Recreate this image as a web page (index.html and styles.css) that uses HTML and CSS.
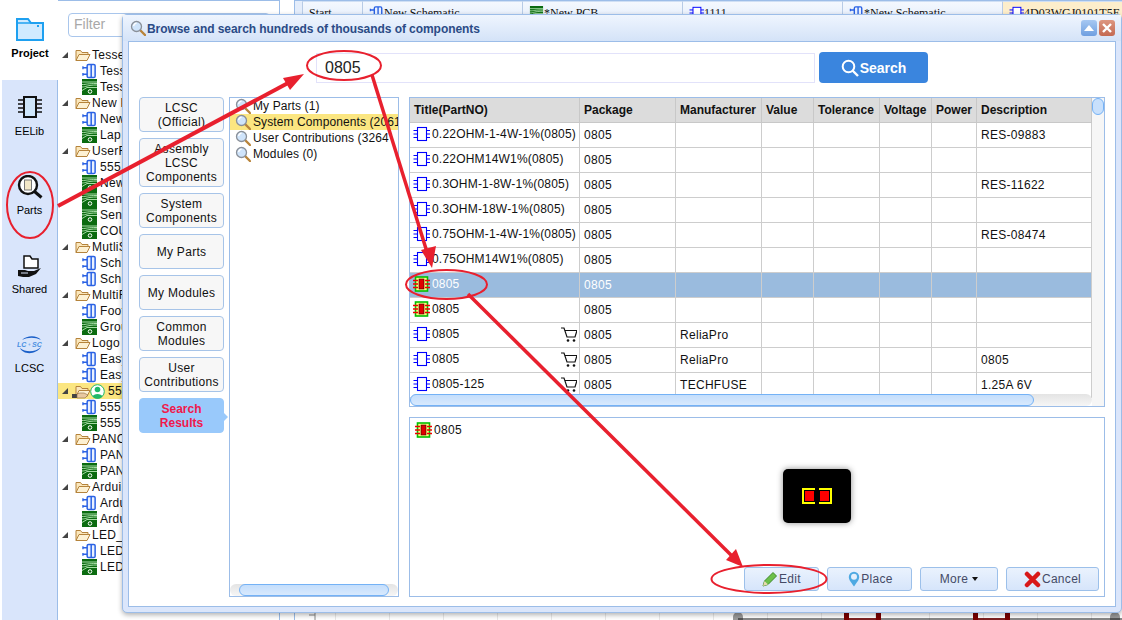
FILE: index.html
```html
<!DOCTYPE html>
<html lang="en">
<head>
<meta charset="utf-8">
<title>Browse components</title>
<link rel="stylesheet" href="styles.css">
</head>
<body>
<svg class="defs" width="0" height="0" aria-hidden="true">
  <symbol id="sch" viewBox="0 0 16 16">
    <rect x="5.500" y="1" width="8.500" height="14" rx="1.500" fill="#eaf1ff" stroke="#2a62e4" stroke-width="1.600"/>
    <path d="M1 4.500h4.500M1 11.500h4.500M9.800 1v14" fill="none" stroke="#2a62e4" stroke-width="1.600"/>
    <path d="M1 3v3M1 10v3" stroke="#2a62e4" stroke-width="1.400"/>
  </symbol>
  <symbol id="pcb" viewBox="0 0 15 16">
    <rect width="15" height="16" fill="#0b6b10"/>
    <path d="M0 3h15M0 5.500c5 0 5-1 15-1M0 8c4 0 5-2 15-2M0 11.500l5-3h10" fill="none" stroke="#a6dca6" stroke-width="1"/>
    <circle cx="8" cy="12.500" r="1.800" fill="#0b6b10" stroke="#fff" stroke-width="1"/>
  </symbol>
  <symbol id="tsch" viewBox="0 0 17 16">
    <rect x="4.500" y="1.500" width="9" height="13" fill="#fff" stroke="#0000ff" stroke-width="1.100"/>
    <path d="M0.500 4.500h4M0.500 8h4M0.500 11.500h4M13.500 4.500H17M13.500 8H17M13.500 11.500H17" stroke="#0000ff" stroke-width="1.100"/>
  </symbol>
  <symbol id="chip" viewBox="0 0 17 16">
    <rect x="2.500" y="1" width="12" height="14" fill="#ffff80" stroke="#00c000" stroke-width="1.600"/>
    <rect x="6" y="3" width="5" height="10" fill="#e00000" stroke="#300" stroke-width=".6"/>
    <path d="M0 4.500h5M0 8h5M0 11.500h5M12 4.500h5M12 8h5M12 11.500h5" stroke="#f00000" stroke-width="1.500"/>
  </symbol>
  <symbol id="cart" viewBox="0 0 16 15">
    <path d="M0 1h3l3 9h8l2-6.500H4" fill="none" stroke="#111" stroke-width="1.200"/>
    <circle cx="7" cy="13.500" r="1.300" fill="#111"/><circle cx="13" cy="13.500" r="1.300" fill="#111"/>
  </symbol>
  <symbol id="lens" viewBox="0 0 16 16">
    <path d="M10 10l5 5" stroke="#b9843a" stroke-width="2.400" stroke-linecap="round"/>
    <circle cx="6.500" cy="6.500" r="5" fill="#cfe4fb" stroke="#8a9099" stroke-width="1.300"/>
    <path d="M3.500 6c.5-2 1.500-2.700 3-3" fill="none" stroke="#fff" stroke-width="1.300"/>
  </symbol>
  <symbol id="folder" viewBox="0 0 16 14">
    <path d="M1 12.500V2.500h4.500l1.500 2h6v2" fill="#fbe7bb" stroke="#b5833b"/>
    <path d="M1 12.500l3-6h11l-3 6z" fill="#fdf1d3" stroke="#b5833b"/>
  </symbol>
</svg>

<div class="app">
  <nav class="rail">
    <div class="rail-item rail-active">
      <svg class="rail-icon" width="28" height="24" viewBox="0 0 28 24"><path d="M1 23V2h11l3 4h12v17z" fill="#cfeaff" stroke="#1ea0f0" stroke-width="2"/><path d="M1 6h14" stroke="#1ea0f0" stroke-width="1.500"/><rect x="21" y="8" width="2" height="2" fill="#1ea0f0"/></svg>
      <span class="rail-label rail-bold lbl-project">Project</span>
    </div>
    <div class="rail-item">
      <svg class="rail-icon" width="26" height="24" viewBox="0 0 26 24"><rect x="7" y="2" width="12" height="20" fill="#cfe6fb" stroke="#111" stroke-width="2"/><path d="M1 5h5M1 9h5M1 13h5M1 17h5M20 5h5M20 9h5M20 13h5M20 17h5" stroke="#111" stroke-width="1.500"/></svg>
      <span class="rail-label lbl-eelib">EELib</span>
    </div>
    <div class="rail-item">
      <svg class="rail-icon" width="26" height="24" viewBox="0 0 26 24"><circle cx="11" cy="10" r="9" fill="#fff" stroke="#111" stroke-width="2.400"/><rect x="7.500" y="5" width="7" height="10" fill="#f3e8c8" stroke="#777"/><path d="M17.500 16.500l7 6" stroke="#111" stroke-width="3"/></svg>
      <span class="rail-label lbl-parts">Parts</span>
    </div>
    <div class="rail-item">
      <svg class="rail-icon" width="26" height="24" viewBox="0 0 26 24"><path d="M7 13V1h6l2 3h6v9z" fill="#fff" stroke="#111" stroke-width="1.500"/><path d="M1 15h7l3 1h6l7-3-5 6-7 3H6l-5-1z" fill="#111"/><path d="M4 18h7" stroke="#d9e5fb"/></svg>
      <span class="rail-label lbl-shared">Shared</span>
    </div>
    <div class="rail-item">
      <svg class="rail-icon logo-icon" width="26" height="20" viewBox="0 0 26 20"><path d="M3 13c3 7 16 7 21-1-5 5-15 6-21 1zM5 5c5-5 15-5 19 0-6-3-13-3-19 0z" fill="#1a5fc8"/><text class="logo-text" x="0" y="12">LC</text><text class="logo-text" x="15" y="12">SC</text><circle cx="12.500" cy="9.500" r="1" fill="#7fb2ee"/></svg>
      <span class="rail-label lbl-lcsc">LCSC</span>
    </div>
  </nav>

  <aside class="tree-panel">
    <div class="filter-row"><input class="filter" placeholder="Filter"></div>
    <ul class="tree">
      <li class="folder-row"><i class="tri"></i><svg class="ic-f"><use href="#folder"/></svg>Tesse</li>
      <li class="leaf"><svg class="ic"><use href="#sch"/></svg>Tess</li>
      <li class="leaf"><svg class="ic"><use href="#pcb"/></svg>Tess</li>
      <li class="folder-row"><i class="tri"></i><svg class="ic-f"><use href="#folder"/></svg>New P</li>
      <li class="leaf"><svg class="ic"><use href="#sch"/></svg>New</li>
      <li class="leaf"><svg class="ic"><use href="#pcb"/></svg>Lap</li>
      <li class="folder-row"><i class="tri"></i><svg class="ic-f"><use href="#folder"/></svg>UserF</li>
      <li class="leaf"><svg class="ic"><use href="#sch"/></svg>555</li>
      <li class="leaf"><svg class="ic"><use href="#pcb"/></svg>New</li>
      <li class="leaf"><svg class="ic"><use href="#pcb"/></svg>Sen</li>
      <li class="leaf"><svg class="ic"><use href="#pcb"/></svg>Sen</li>
      <li class="leaf"><svg class="ic"><use href="#pcb"/></svg>COU</li>
      <li class="folder-row"><i class="tri"></i><svg class="ic-f"><use href="#folder"/></svg>MutliS</li>
      <li class="leaf"><svg class="ic"><use href="#sch"/></svg>Sch</li>
      <li class="leaf"><svg class="ic"><use href="#sch"/></svg>Sch</li>
      <li class="folder-row"><i class="tri"></i><svg class="ic-f"><use href="#folder"/></svg>MultiF</li>
      <li class="leaf"><svg class="ic"><use href="#sch"/></svg>Foot</li>
      <li class="leaf"><svg class="ic"><use href="#pcb"/></svg>Grou</li>
      <li class="folder-row"><i class="tri"></i><svg class="ic-f"><use href="#folder"/></svg>Logo</li>
      <li class="leaf"><svg class="ic"><use href="#sch"/></svg>Easy</li>
      <li class="leaf"><svg class="ic"><use href="#sch"/></svg>Easy</li>
      <li class="folder-row shared-row"><i class="tri"></i><span class="shared-folder"><svg class="ic-f"><use href="#folder"/></svg><svg class="ic-hand" viewBox="0 0 16 7"><path d="M0 2h5V6H0z" fill="#444"/><path d="M5 2l3-1h4l4 2-3 3H5z" fill="#e8c8a0" stroke="#8a6a40" stroke-width=".6"/></svg></span><svg class="ic-user" viewBox="0 0 15 15"><circle cx="7.500" cy="7.500" r="6.800" fill="#fff" stroke="#1fb86a"/><circle cx="7.500" cy="5.500" r="2.800" fill="#1fb86a"/><path d="M2.500 12.500c1-3.500 9-3.500 10 0a6.500 6.500 0 0 1-10 0z" fill="#1fb86a"/></svg>555</li>
      <li class="leaf"><svg class="ic"><use href="#sch"/></svg>555</li>
      <li class="leaf"><svg class="ic"><use href="#pcb"/></svg>555</li>
      <li class="folder-row"><i class="tri"></i><svg class="ic-f"><use href="#folder"/></svg>PANC</li>
      <li class="leaf"><svg class="ic"><use href="#sch"/></svg>PAN</li>
      <li class="leaf"><svg class="ic"><use href="#pcb"/></svg>PAN</li>
      <li class="folder-row"><i class="tri"></i><svg class="ic-f"><use href="#folder"/></svg>Ardui</li>
      <li class="leaf"><svg class="ic"><use href="#sch"/></svg>Ardu</li>
      <li class="leaf"><svg class="ic"><use href="#pcb"/></svg>Ardu</li>
      <li class="folder-row"><i class="tri"></i><svg class="ic-f"><use href="#folder"/></svg>LED_</li>
      <li class="leaf"><svg class="ic"><use href="#sch"/></svg>LED</li>
      <li class="leaf"><svg class="ic"><use href="#pcb"/></svg>LED</li>
    </ul>
  </aside>

  <div class="gutter"></div>

  <main class="workspace">
    <div class="tabs">
      <div class="tab tab-start">Start</div>
      <div class="tab"><svg class="tab-ic"><use href="#sch"/></svg>New Schematic</div>
      <div class="tab"><svg class="tab-ic"><use href="#pcb"/></svg>*New PCB</div>
      <div class="tab"><svg class="tab-ic"><use href="#tsch"/></svg>1111</div>
      <div class="tab"><svg class="tab-ic"><use href="#sch"/></svg>*New Schematic</div>
      <div class="tab tab-on"><svg class="tab-ic"><use href="#tsch"/></svg>4D03WGJ0101T5E</div>
    </div>
    <div class="canvas">
      <svg class="canvas-art" width="829" height="606" viewBox="293 14 829 606">
        <path d="M733 620v-3a5 5 0 0 1 10 0v3M1110 620v-3a5 5 0 0 1 10 0v3" fill="#999"/>
        <path d="M738 619h384" stroke="#111"/>
        <path d="M846.500 613v7M878.500 613v7M975.500 613v7M1007.500 613v7" stroke="#7a0000" stroke-width="5"/>
        <path d="M849 619h28M978 619h28" stroke="#7a0000" stroke-width="1.500"/>
        <path d="M315 613v7M315 615h-6" stroke="#888"/>
      </svg>
    </div>
  </main>
</div>

<section class="dialog">
  <header class="dlg-title">
    <svg class="ic-lens ic-lens-title"><use href="#lens"/></svg>
    <span class="dlg-title-text">Browse and search hundreds of thousands of components</span>
    <span class="dlg-btn dlg-collapse"><svg width="10" height="6" viewBox="0 0 10 6"><path d="M5 0l5 6H0z" fill="#fff"/></svg></span>
    <span class="dlg-btn dlg-close"><svg width="10" height="10" viewBox="0 0 10 10"><path d="M1 1l8 8M9 1l-8 8" stroke="#fff" stroke-width="2.400"/></svg></span>
  </header>
  <div class="dlg-body">
    <div class="search-row">
      <input class="search-input" value="0805">
      <button class="search-btn"><svg width="18" height="18" viewBox="0 0 18 18"><circle cx="7.500" cy="7.500" r="5.800" fill="none" stroke="#fff" stroke-width="2"/><path d="M11.500 11.500l5.500 5.500" stroke="#fff" stroke-width="2.400"/></svg>Search</button>
    </div>
    <div class="dlg-main">
      <div class="side">
        <div class="side-btn">LCSC<br>(Official)</div>
        <div class="side-btn">Assembly<br>LCSC<br>Components</div>
        <div class="side-btn">System<br>Components</div>
        <div class="side-btn">My Parts</div>
        <div class="side-btn">My Modules</div>
        <div class="side-btn">Common<br>Modules</div>
        <div class="side-btn">User<br>Contributions</div>
        <div class="side-btn side-active">Search<br>Results</div>
      </div>
      <div class="cat-list">
        <div class="cat"><svg class="ic-lens"><use href="#lens"/></svg>My Parts (1)</div>
        <div class="cat cat-on"><svg class="ic-lens"><use href="#lens"/></svg>System Components (2061</div>
        <div class="cat"><svg class="ic-lens"><use href="#lens"/></svg>User Contributions (3264</div>
        <div class="cat"><svg class="ic-lens"><use href="#lens"/></svg>Modules (0)</div>
        <div class="hbar hbar-list"><span class="thumb"></span></div>
      </div>
      <div class="right">
        <div class="grid-wrap">
          <table class="grid">
            <colgroup><col class="c1"><col class="c2"><col class="c3"><col class="c4"><col class="c5"><col class="c6"><col class="c7"><col class="c8"></colgroup>
            <thead><tr><th>Title(PartNO)</th><th>Package</th><th>Manufacturer</th><th>Value</th><th>Tolerance</th><th>Voltage</th><th>Power</th><th>Description</th></tr></thead>
            <tbody>
              <tr><td><div class="tcell"><svg class="ic-t"><use href="#tsch"/></svg>0.22OHM-1-4W-1%(0805)</div></td><td>0805</td><td></td><td></td><td></td><td></td><td></td><td>RES-09883</td></tr>
              <tr><td><div class="tcell"><svg class="ic-t"><use href="#tsch"/></svg>0.22OHM14W1%(0805)</div></td><td>0805</td><td></td><td></td><td></td><td></td><td></td><td></td></tr>
              <tr><td><div class="tcell"><svg class="ic-t"><use href="#tsch"/></svg>0.3OHM-1-8W-1%(0805)</div></td><td>0805</td><td></td><td></td><td></td><td></td><td></td><td>RES-11622</td></tr>
              <tr><td><div class="tcell"><svg class="ic-t"><use href="#tsch"/></svg>0.3OHM-18W-1%(0805)</div></td><td>0805</td><td></td><td></td><td></td><td></td><td></td><td></td></tr>
              <tr><td><div class="tcell"><svg class="ic-t"><use href="#tsch"/></svg>0.75OHM-1-4W-1%(0805)</div></td><td>0805</td><td></td><td></td><td></td><td></td><td></td><td>RES-08474</td></tr>
              <tr><td><div class="tcell"><svg class="ic-t"><use href="#tsch"/></svg>0.75OHM14W1%(0805)</div></td><td>0805</td><td></td><td></td><td></td><td></td><td></td><td></td></tr>
              <tr class="row-on"><td><div class="tcell"><svg class="ic-t"><use href="#chip"/></svg>0805</div></td><td>0805</td><td></td><td></td><td></td><td></td><td></td><td></td></tr>
              <tr><td><div class="tcell"><svg class="ic-t"><use href="#chip"/></svg>0805</div></td><td>0805</td><td></td><td></td><td></td><td></td><td></td><td></td></tr>
              <tr><td><div class="tcell"><svg class="ic-t"><use href="#tsch"/></svg>0805<svg class="ic-cart"><use href="#cart"/></svg></div></td><td>0805</td><td>ReliaPro</td><td></td><td></td><td></td><td></td><td></td></tr>
              <tr><td><div class="tcell"><svg class="ic-t"><use href="#tsch"/></svg>0805<svg class="ic-cart"><use href="#cart"/></svg></div></td><td>0805</td><td>ReliaPro</td><td></td><td></td><td></td><td></td><td>0805</td></tr>
              <tr><td><div class="tcell"><svg class="ic-t"><use href="#tsch"/></svg>0805-125<svg class="ic-cart"><use href="#cart"/></svg></div></td><td>0805</td><td>TECHFUSE</td><td></td><td></td><td></td><td></td><td>1.25A 6V</td></tr>
            </tbody>
          </table>
          <div class="vbar"><span class="vthumb"></span></div>
          <div class="hbar hbar-grid"><span class="thumb"></span></div>
        </div>
        <div class="preview">
          <div class="preview-item"><svg class="ic-t"><use href="#chip"/></svg>0805</div>
          <div class="tile"><svg width="30" height="16" viewBox="0 0 30 16"><path d="M13 1H1v14h12M17 1h12v14H17" fill="none" stroke="#ff0" stroke-width="2"/><rect x="3" y="3" width="9" height="10" fill="#f00"/><rect x="18" y="3" width="9" height="10" fill="#f00"/></svg></div>
          <div class="actions">
            <button class="act act-edit"><svg width="16" height="16" viewBox="0 0 16 16"><path d="M1 15l1.500-5L11 1.500 14.500 5 6 13.500z" fill="#6cc04a" stroke="#3f8a2a"/><path d="M1 15l1.500-5L6 13.500z" fill="#e8d9b0"/></svg>Edit</button>
            <button class="act act-place"><svg width="12" height="16" viewBox="0 0 12 16"><path d="M6 15.500C3 11 .8 9 .8 6a5.200 5.200 0 0 1 10.400 0c0 3-2.200 5-5.200 9.500z" fill="#4ea9e2"/><circle cx="6" cy="5.800" r="3" fill="#e4effc"/></svg>Place</button>
            <button class="act act-more">More<i class="caret"></i></button>
            <button class="act act-cancel"><svg width="17" height="17" viewBox="0 0 17 17"><path d="M3 3l11 11M14 3L3 14" stroke="#d81818" stroke-width="4.500" stroke-linecap="round"/></svg>Cancel</button>
          </div>
        </div>
      </div>
    </div>
  </div>
</section>

<svg class="overlay" width="1122" height="620" viewBox="0 0 1122 620" aria-hidden="true">
  <g fill="none" stroke="#e8202e" stroke-width="2">
    <ellipse cx="30" cy="205" rx="23" ry="33"/>
    <ellipse cx="344" cy="65.500" rx="37" ry="14.500"/>
    <ellipse cx="446.500" cy="284.500" rx="40.500" ry="14.500"/>
    <ellipse cx="769" cy="579" rx="57.500" ry="14"/>
  </g>
  <g stroke="#e8202e" fill="none">
    <path d="M58 206L288 83" stroke-width="4"/>
    <path d="M372 75L427 252" stroke-width="3.500"/>
    <path d="M468 294L733 557" stroke-width="3.500"/>
  </g>
  <g fill="#e8202e">
    <path d="M304 74L283 78L290 90z"/>
    <path d="M432 268L421 250L436 246z"/>
    <path d="M743 567L726 560L736 549z"/>
  </g>
</svg>
</body>
</html>
```

FILE: styles.css
```css
* { box-sizing: border-box; }
html, body { margin: 0; padding: 0; }
body {
  width: 1122px;
  height: 620px;
  overflow: hidden;
  position: relative;
  background: #fff;
  font-family: "Liberation Sans", Arial, sans-serif;
  font-size: 12px;
  color: #111;
}
.defs { position: absolute; }

.app { display: flex; height: 620px; padding-left: 2px; }

/* left rail */
.rail {
  width: 56px;
  flex: none;
  background: #d9e5fb;
  border-right: 1px solid #9cbde8;
}
.rail-item {
  height: 80px;
  padding-top: 15px;
  display: flex;
  flex-direction: column;
  align-items: center;
}
.rail-active { background: #fff; padding-top: 17px; margin-right: -1px; }
.rail-icon { display: block; height: 24px; flex: none; }
.logo-icon { height: 20px; }
.rail-label { font-size: 11px; line-height: 13px; color: #000; }
.lbl-project { margin-top: 6px; }
.lbl-eelib { margin-top: 6px; }
.lbl-parts { margin-top: 5px; }
.lbl-shared { margin-top: 4px; }
.lbl-lcsc { margin-top: 7px; }
.rail-bold { font-weight: 700; }
.logo-text { font: italic 700 7px "Liberation Sans", sans-serif; fill: #4a90e2; }

/* tree */
.tree-panel {
  width: 222px;
  flex: none;
  border-top: 1px solid #9cbde8;
  border-right: 1px solid #9cbde8;
  padding-top: 12px;
}
.filter-row { padding-left: 10px; }
.filter {
  width: 202px;
  height: 24px;
  border: 1px solid #a9c6ec;
  border-radius: 4px;
  padding: 0 5px 2px;
  font: 14px "Liberation Sans", sans-serif;
  outline: none;
}
.filter::placeholder { color: #a8a8a8; opacity: 1; }
.tree { list-style: none; margin: 10px 0 0; padding: 0; }
.tree li {
  height: 16px;
  display: flex;
  align-items: center;
  white-space: nowrap;
  letter-spacing: .3px;
  line-height: 16px;
}
.folder-row { padding-left: 4px; }
.leaf { padding-left: 24px; }
.tri {
  width: 0;
  height: 0;
  border-style: solid;
  border-width: 0 0 6px 6px;
  border-color: transparent transparent #444 transparent;
  margin-right: 7px;
  flex: none;
}
.ic-f { width: 16px; height: 14px; margin-right: 1px; flex: none; }
.ic { width: 15px; height: 16px; margin-right: 3px; flex: none; }
.shared-folder { position: relative; display: flex; margin-right: -2px; }
.ic-hand { position: absolute; left: -3px; top: 8px; width: 16px; height: 7px; }
.ic-user { width: 15px; height: 15px; margin-right: 3px; flex: none; }
.shared-row { background: #fbe681; }

.gutter { width: 14px; flex: none; }

/* workspace */
.workspace { flex: 1; min-width: 0; display: flex; flex-direction: column; }
.tabs {
  height: 32px;
  flex: none;
  display: flex;
  padding-left: 7px;
  border-top: 1px solid #9cbde8;
  border-left: 1px solid #9cbde8;
  background: #e4edfb;
  font-family: "Liberation Serif", serif;
  overflow: hidden;
}
.tab {
  width: 160px;
  flex: none;
  padding: 4px 0 0 6px;
  border-left: 1px solid #b7cbe6;
  border-top: 1px solid #cfdff4;
  display: flex;
  align-items: flex-start;
  line-height: 14px;
  white-space: nowrap;
  background: linear-gradient(#f4f8fe, #d9e6f9);
}
.tab-start { width: 60px; }
.tab-on { background: #fdeecb; }
.tab-ic { width: 15px; height: 14px; flex: none; }
.canvas {
  flex: 1;
  position: relative;
  border-left: 1px solid #9cbde8;
  background-image: linear-gradient(to right, #e8e8e8 1px, transparent 1px);
  background-size: 54px 100%;
  background-position: 40px 0;
}
.canvas-art { position: absolute; right: 0; bottom: 0; }

/* dialog window */
.dialog {
  position: absolute;
  left: 122px;
  top: 14px;
  width: 1000px;
  height: 599px;
  background: #dbe6fb;
  border: 1px solid #9cbde8;
  border-radius: 5px;
  padding: 0 5px 5px;
  box-shadow: 0 2px 5px rgba(0,0,0,.3);
  display: flex;
  flex-direction: column;
}
.dlg-title {
  height: 26px;
  flex: none;
  margin: 0 -5px;
  padding: 0 6px 0 7px;
  background: linear-gradient(#eff5fe, #d4e3f8);
  display: flex;
  align-items: center;
}
.ic-lens { width: 16px; height: 16px; flex: none; margin-right: 2px; }
.ic-lens-title { margin-right: 1px; }
.dlg-title-text {
  font-weight: 700;
  color: #2b4b86;
  flex: 1;
  padding-top: 2px;
  letter-spacing: -.06px;
}
.dlg-btn {
  width: 16px;
  height: 16px;
  border-radius: 3px;
  margin-left: 2px;
  display: flex;
  align-items: center;
  justify-content: center;
}
.dlg-collapse { background: linear-gradient(#a6c8f2, #6f9fe0); }
.dlg-close { background: linear-gradient(#dd9680, #c46a52); }

.dlg-body {
  flex: 1;
  background: #fff;
  border: 1px solid #9cbde8;
  padding: 10px 10px 0;
}
.search-row { display: flex; align-items: flex-end; gap: 4px; padding-left: 177px; height: 31px; margin-bottom: 14px; }
.search-input {
  width: 499px;
  height: 30px;
  border: 1px solid #e2e2fa;
  padding: 0 8px;
  font: 16px "Liberation Sans", sans-serif;
  color: #222;
  outline: none;
}
.search-btn {
  width: 109px;
  height: 31px;
  border: 0;
  border-radius: 4px;
  background: #3a85de;
  color: #fff;
  font: 700 14px "Liberation Sans", sans-serif;
  display: flex;
  align-items: center;
  justify-content: center;
  gap: 1px;
  padding: 0;
}
.dlg-main { display: flex; height: 500px; }

/* sidebar */
.side { width: 85px; flex: none; margin-right: 5px; display: flex; flex-direction: column; gap: 6px; }
.side-btn {
  min-height: 35px;
  border: 1px solid #a7c4e8;
  border-radius: 4px;
  background: #f7f7f7;
  text-align: center;
  line-height: 14px;
  letter-spacing: .3px;
  padding: 3px 0 2px;
  display: flex;
  align-items: center;
  justify-content: center;
  color: #111;
}
.side-active {
  position: relative;
  background: #99c9fb;
  border-color: #99c9fb;
  color: #f0184c;
  font-weight: 700;
  letter-spacing: 0;
}
.side-active::after {
  content: "";
  position: absolute;
  left: 100%;
  top: 13px;
  border-style: solid;
  border-width: 5px 0 5px 5px;
  border-color: transparent transparent transparent #99c9fb;
}

/* category list */
.cat-list {
  width: 170px;
  flex: none;
  position: relative;
  margin-right: 10px;
  border: 1px solid #9cbde8;
  overflow: hidden;
}
.cat {
  height: 16px;
  display: flex;
  align-items: center;
  padding-left: 5px;
  white-space: nowrap;
  letter-spacing: .1px;
}
.cat-on { background: #fbe681; }

/* scroll bars */
.hbar {
  position: absolute;
  height: 12px;
  background: linear-gradient(#e4e4e4, #f6f6f6);
  border-radius: 6px;
}
.thumb {
  position: absolute;
  top: 0;
  bottom: 0;
  border: 1px solid #74b2f6;
  border-radius: 6px;
  background: linear-gradient(#c4defc, #d8e9fd);
}
.hbar-list { left: 0; right: 0; bottom: 0; }
.hbar-list .thumb { left: 9px; width: 150px; }
.hbar-grid { left: 0; width: 682px; bottom: 0; }
.hbar-grid .thumb { left: 0; width: 624px; }
.vbar { position: absolute; top: 0; right: 0; bottom: 0; width: 12px; background: #f6f6f6; }
.vthumb {
  position: absolute;
  left: 0;
  right: 0;
  top: 0;
  height: 17px;
  border: 1px solid #74b2f6;
  border-radius: 6px;
  background: #c8e0fc;
}

/* grid */
.right { flex: 1; min-width: 0; display: flex; flex-direction: column; gap: 10px; }
.grid-wrap {
  height: 310px;
  flex: none;
  position: relative;
  border: 1px solid #9cbde8;
  overflow: hidden;
}
.grid { border-collapse: separate; border-spacing: 0; table-layout: fixed; width: 682px; }
.c1 { width: 170px; } .c2 { width: 96px; } .c3 { width: 86px; } .c4 { width: 52px; }
.c5 { width: 66px; } .c6 { width: 52px; } .c7 { width: 45px; } .c8 { width: 115px; }
.grid th {
  height: 25px;
  background: #dcdcdc;
  border-right: 1px solid #c8c8c8;
  border-bottom: 1px solid #c8c8c8;
  text-align: left;
  padding: 0 0 0 4px;
  font-weight: 700;
  white-space: nowrap;
}
.grid td {
  height: 25px;
  border-right: 1px solid #cdcdcd;
  border-bottom: 1px solid #cdcdcd;
  padding: 0 0 0 4px;
  white-space: nowrap;
  overflow: hidden;
  letter-spacing: .3px;
}
.grid td:first-child { padding-left: 3px; }
.tcell { display: flex; align-items: center; margin-top: -2px; height: 20px; letter-spacing: .2px; }
.ic-t { width: 17px; height: 16px; margin-right: 2px; flex: none; }
.ic-cart { width: 16px; height: 15px; margin-left: auto; margin-right: 2px; flex: none; }
.row-on td { background: #9abbde; color: #fff; }

/* preview */
.preview {
  flex: 1;
  position: relative;
  border: 1px solid #9cbde8;
  display: flex;
  flex-direction: column;
}
.preview-item { display: flex; align-items: center; height: 16px; margin: 4px 0 0 5px; letter-spacing: .3px; }
.tile {
  position: absolute;
  left: 373px;
  top: 51px;
  width: 68px;
  height: 54px;
  background: #000;
  border-radius: 5px;
  box-shadow: 0 0 6px rgba(0,0,0,.45);
  display: flex;
  align-items: center;
  justify-content: center;
}
.actions { margin-top: auto; display: flex; justify-content: flex-end; gap: 8px; padding: 0 5px 5px 0; }
.act {
  height: 24px;
  border: 1px solid #9cc0ea;
  border-radius: 3px;
  background: linear-gradient(#eaf2fd, #d6e5fb);
  color: #444a66;
  font: 12px "Liberation Sans", sans-serif;
  letter-spacing: .3px;
  display: flex;
  align-items: center;
  justify-content: center;
  gap: 1px;
  padding: 0;
}
.act-edit { width: 75px; }
.act-place { width: 85px; padding-left: 2px; }
.act-more { width: 78px; gap: 4px; }
.act-cancel { width: 93px; }
.caret {
  width: 0;
  height: 0;
  border-style: solid;
  border-width: 4px 3.500px 0;
  border-color: #111 transparent transparent;
}

.overlay { position: absolute; left: 0; top: 0; pointer-events: none; }
```
